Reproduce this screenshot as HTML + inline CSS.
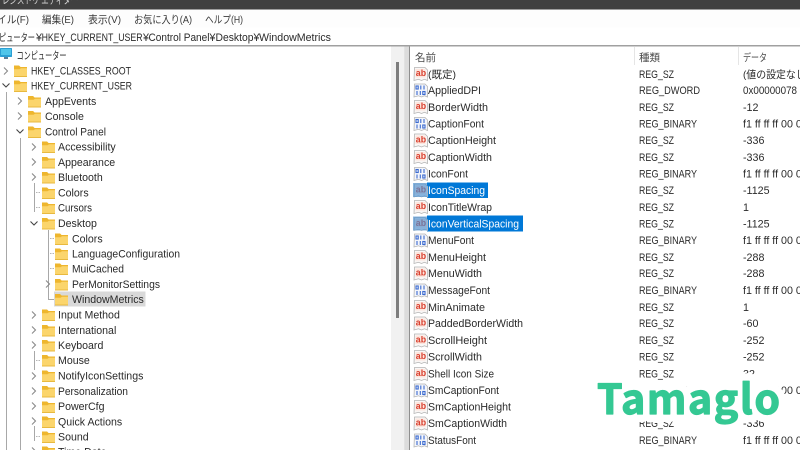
<!DOCTYPE html>
<html><head><meta charset="utf-8"><style>
html,body{margin:0;padding:0;background:#fff;width:800px;height:450px;overflow:hidden}
svg{display:block}
text{font-family:"Liberation Sans","Noto Sans CJK JP",sans-serif;font-size:10.700px;fill:#2a2a2a}
.t text{font-size:10.600px}
.j{font-size:10.500px}
.line{stroke:#a8a8a8;stroke-width:1;fill:none}
.stub{stroke:#b5b5b5;stroke-width:1;fill:none;stroke-dasharray:1.500 1}
.chev{stroke:#8a8a8a;stroke-width:1.100;fill:none}
.chevd{stroke:#444;stroke-width:1.100;fill:none}
</style></head><body>
<svg width="800" height="450" viewBox="0 0 800 450" xmlns="http://www.w3.org/2000/svg">
<defs>
<g id="f"><path d="M0 1.500h5l1.500 1.500h6.500v9.500h-13z" fill="#fbd56c"/><path d="M0 1.500h5l1.500 1.500h6.500v1.300h-6l-1.500 1h-5.500z" fill="#eeb62e"/><rect x="0" y="12" width="13" height="1" fill="#e8b93f"/></g>
<g id="a"><path d="M.5 .5h10.500l2.500 2.500v10.500l-3-1.200-3 1.200-3-1.200-4.500 1.200z" fill="#f9f7f6" stroke="#b4b4b4" stroke-width=".8"/><rect x="1.500" y="2" width="10" height="8.500" fill="#fde6de"/><text x="1.800" y="9.200" style="font-size:8.800px;font-weight:bold;fill:#d8402f">ab</text></g>
<g id="b"><path d="M.5 .5h10.500l2.500 2.500v10.500l-3-1.200-3 1.200-3-1.200-4.500 1.200z" fill="#f4f6fb" stroke="#b4b4b4" stroke-width=".8"/><g fill="none" stroke="#3a6ad0" stroke-width="1.100"><rect x="2" y="2.500" width="2.200" height="3"/><path d="M6.800 2v4M10 2v4"/><path d="M3 7.500v4M6.300 7.500v4"/><rect x="8.800" y="8" width="2.200" height="3"/></g></g>
<path id="cr" d="M-2 -3.500 L1.500 0 L-2 3.500" class="chev"/>
<path id="cd" d="M-3.500 -1.500 L0 2 L3.500 -1.500" class="chevd"/>
</defs>

<!-- title bar -->
<rect width="800" height="9.500" fill="#404040"/>
<text x="2" y="3.500" style="font-size:10.500px;fill:#d6d6d6" textLength="76" lengthAdjust="spacingAndGlyphs">レジストリ エディター</text>

<!-- menu -->
<rect y="9.500" width="800" height="18" fill="#fdfdfd"/>
<g style="fill:#3a3a3a">
<text x="-3" y="23" class="j" textLength="32" lengthAdjust="spacingAndGlyphs" style="fill:#3a3a3a">イル(F)</text>
<text x="42" y="23" class="j" textLength="32" lengthAdjust="spacingAndGlyphs" style="fill:#3a3a3a">編集(E)</text>
<text x="88" y="23" class="j" textLength="33" lengthAdjust="spacingAndGlyphs" style="fill:#3a3a3a">表示(V)</text>
<text x="134" y="23" class="j" textLength="58" lengthAdjust="spacingAndGlyphs" style="fill:#3a3a3a">お気に入り(A)</text>
<text x="205" y="23" class="j" textLength="38" lengthAdjust="spacingAndGlyphs" style="fill:#3a3a3a">ヘルプ(H)</text>
</g>

<!-- address -->
<rect y="27.500" width="800" height="17" fill="#fff"/>
<text x="-1" y="41" class="j" textLength="36" lengthAdjust="spacingAndGlyphs">ピューター</text>
<text x="36" y="41">¥</text>
<text x="41.600" y="41" textLength="101" lengthAdjust="spacingAndGlyphs">HKEY_CURRENT_USER</text>
<text x="143" y="41">¥</text>
<text x="148.500" y="41" textLength="61" lengthAdjust="spacingAndGlyphs">Control Panel</text>
<text x="209.500" y="41">¥</text>
<text x="215.500" y="41" textLength="38" lengthAdjust="spacingAndGlyphs">Desktop</text>
<text x="253.500" y="41">¥</text>
<text x="259" y="41" textLength="72" lengthAdjust="spacingAndGlyphs">WindowMetrics</text>
<rect y="45" width="800" height="1.500" fill="#a0a0a0"/>

<!-- scrollbar / splitter -->
<rect x="391" y="46.500" width="13" height="404" fill="#f1f1f1"/>
<rect x="396" y="62" width="3" height="256" fill="#7d7d7d"/>
<rect x="404" y="46.500" width="1" height="404" fill="#e2e2e2"/>
<rect x="405" y="46.500" width="4" height="404" fill="#dcdcdc"/>
<rect x="409" y="46.500" width="1" height="404" fill="#8f8f8f"/>

<!-- tree lines -->
<path class="line" d="M6.500 92V450M20.500 138V450M34.500 183V212M48.500 230V300M34.500 351V370M34.500 426V441M48.500 299.500H54"/>
<path class="stub" d="M36 192.500H41M36 207.500H41M50 238.500H54M50 253.500H54M50 268.500H54M36 360.500H41M36 436.500H41"/>

<!-- tree -->
<rect x="54" y="291.500" width="91.500" height="15" fill="#d9d9d9"/>
<g>
<rect x="0" y="48" width="12" height="9" rx=".6" fill="#2b9fd4"/><rect x="1" y="49" width="10" height="6" fill="#4fc5ea"/><rect x="4" y="57" width="4" height="2" fill="#5a7d98"/>
</g>
<text x="16.500" y="59" class="j" textLength="50" lengthAdjust="spacingAndGlyphs">コンピューター</text>

<g class="t">
<use href="#cr" x="6" y="71"/><use href="#f" x="14" y="64"/><text x="31" y="74.500" textLength="100" lengthAdjust="spacingAndGlyphs">HKEY_CLASSES_ROOT</text>
<use href="#cd" x="6" y="85"/><use href="#f" x="14" y="79"/><text x="31" y="89.500" textLength="101" lengthAdjust="spacingAndGlyphs">HKEY_CURRENT_USER</text>
<use href="#cr" x="20" y="101"/><use href="#f" x="28" y="94.500"/><text x="45" y="105">AppEvents</text>
<use href="#cr" x="20" y="116"/><use href="#f" x="28" y="109.500"/><text x="45" y="120">Console</text>
<use href="#cd" x="20" y="131"/><use href="#f" x="28" y="125"/><text x="45" y="135.500" textLength="61" lengthAdjust="spacingAndGlyphs">Control Panel</text>
<use href="#cr" x="34" y="147"/><use href="#f" x="42" y="140"/><text x="58" y="150.500">Accessibility</text>
<use href="#cr" x="34" y="162"/><use href="#f" x="42" y="155.500"/><text x="58" y="166">Appearance</text>
<use href="#cr" x="34" y="177"/><use href="#f" x="42" y="170.500"/><text x="58" y="181">Bluetooth</text>
<use href="#f" x="42" y="186"/><text x="58" y="196.500">Colors</text>
<use href="#f" x="42" y="201"/><text x="58" y="211.500" textLength="34" lengthAdjust="spacingAndGlyphs">Cursors</text>
<use href="#cd" x="34" y="223"/><use href="#f" x="42" y="216.500"/><text x="58" y="227">Desktop</text>
<use href="#f" x="55" y="232"/><text x="72" y="242.500">Colors</text>
<use href="#f" x="55" y="247"/><text x="72" y="257.500" textLength="108" lengthAdjust="spacingAndGlyphs">LanguageConfiguration</text>
<use href="#f" x="55" y="262"/><text x="72" y="272.500" textLength="52" lengthAdjust="spacingAndGlyphs">MuiCached</text>
<use href="#cr" x="48" y="284"/><use href="#f" x="55" y="277.500"/><text x="72" y="288" textLength="88" lengthAdjust="spacingAndGlyphs">PerMonitorSettings</text>
<use href="#f" x="55" y="292.500"/><text x="72" y="303">WindowMetrics</text>
<use href="#cr" x="34" y="315"/><use href="#f" x="42" y="308"/><text x="58" y="318.500">Input Method</text>
<use href="#cr" x="34" y="330"/><use href="#f" x="42" y="323.500"/><text x="58" y="334">International</text>
<use href="#cr" x="34" y="345"/><use href="#f" x="42" y="338.500"/><text x="58" y="349">Keyboard</text>
<use href="#f" x="42" y="353.500"/><text x="58" y="364">Mouse</text>
<use href="#cr" x="34" y="376"/><use href="#f" x="42" y="369"/><text x="58" y="379.500">NotifyIconSettings</text>
<use href="#cr" x="34" y="391"/><use href="#f" x="42" y="384.500"/><text x="58" y="395" textLength="70" lengthAdjust="spacingAndGlyphs">Personalization</text>
<use href="#cr" x="34" y="406"/><use href="#f" x="42" y="400"/><text x="58" y="410">PowerCfg</text>
<use href="#cr" x="34" y="421"/><use href="#f" x="42" y="415"/><text x="58" y="425.500">Quick Actions</text>
<use href="#f" x="42" y="430"/><text x="58" y="440.500">Sound</text>
<use href="#cr" x="34" y="451"/><use href="#f" x="42" y="445"/><text x="58" y="455.500">Time Date</text>
</g>

<!-- list header -->
<text x="415" y="61" class="j" style="fill:#4a4a4a">名前</text>
<text x="639" y="61" class="j" style="fill:#4a4a4a">種類</text>
<text x="743" y="61" class="j" style="fill:#4a4a4a" textLength="24" lengthAdjust="spacingAndGlyphs">データ</text>
<rect x="634" y="47" width="1" height="18" fill="#e5e5e5"/><rect x="738" y="47" width="1" height="18" fill="#e5e5e5"/>

<!-- selections -->
<rect x="427" y="182.500" width="61" height="15.500" fill="#0078d7"/>
<rect x="427" y="215.500" width="96" height="16" fill="#0078d7"/>

<!-- list -->
<g class="r">
<use href="#a" x="414" y="67"/><text x="428" y="78" class="j">(既定)</text><text x="639" y="78" textLength="35" lengthAdjust="spacingAndGlyphs">REG_SZ</text><text x="743" y="78" class="j" textLength="66" lengthAdjust="spacingAndGlyphs">(値の設定なし)</text>
<use href="#b" x="414" y="83.500"/><text x="428" y="94" textLength="53" lengthAdjust="spacingAndGlyphs">AppliedDPI</text><text x="639" y="94" textLength="61" lengthAdjust="spacingAndGlyphs">REG_DWORD</text><text x="743" y="94" textLength="54" lengthAdjust="spacingAndGlyphs">0x00000078</text>
<use href="#a" x="414" y="100"/><text x="428" y="111" textLength="60" lengthAdjust="spacingAndGlyphs">BorderWidth</text><text x="639" y="111" textLength="35" lengthAdjust="spacingAndGlyphs">REG_SZ</text><text x="743" y="111">-12</text>
<use href="#b" x="414" y="117"/><text x="428" y="127.500" textLength="56" lengthAdjust="spacingAndGlyphs">CaptionFont</text><text x="639" y="127.500" textLength="58" lengthAdjust="spacingAndGlyphs">REG_BINARY</text><text x="743" y="127.500">f1 ff ff ff 00 00</text>
<use href="#a" x="414" y="133.500"/><text x="428" y="144" textLength="68" lengthAdjust="spacingAndGlyphs">CaptionHeight</text><text x="639" y="144" textLength="35" lengthAdjust="spacingAndGlyphs">REG_SZ</text><text x="743" y="144">-336</text>
<use href="#a" x="414" y="150"/><text x="428" y="161" textLength="64" lengthAdjust="spacingAndGlyphs">CaptionWidth</text><text x="639" y="161" textLength="35" lengthAdjust="spacingAndGlyphs">REG_SZ</text><text x="743" y="161">-336</text>
<use href="#b" x="414" y="167"/><text x="428" y="177.500" textLength="40" lengthAdjust="spacingAndGlyphs">IconFont</text><text x="639" y="177.500" textLength="58" lengthAdjust="spacingAndGlyphs">REG_BINARY</text><text x="743" y="177.500">f1 ff ff ff 00 00</text>
<use href="#a" x="414" y="183.500"/><rect x="413" y="183" width="14" height="14" fill="#4a8fd0" opacity=".65"/><text x="428" y="194" style="fill:#fff" textLength="57" lengthAdjust="spacingAndGlyphs">IconSpacing</text><text x="639" y="194" textLength="35" lengthAdjust="spacingAndGlyphs">REG_SZ</text><text x="743" y="194">-1125</text>
<use href="#a" x="414" y="200"/><text x="428" y="211" textLength="64" lengthAdjust="spacingAndGlyphs">IconTitleWrap</text><text x="639" y="211" textLength="35" lengthAdjust="spacingAndGlyphs">REG_SZ</text><text x="743" y="211">1</text>
<use href="#a" x="414" y="217"/><rect x="413" y="216.500" width="14" height="14" fill="#4a8fd0" opacity=".65"/><text x="428" y="227.500" style="fill:#fff" textLength="91" lengthAdjust="spacingAndGlyphs">IconVerticalSpacing</text><text x="639" y="227.500" textLength="35" lengthAdjust="spacingAndGlyphs">REG_SZ</text><text x="743" y="227.500">-1125</text>
<use href="#b" x="414" y="233.500"/><text x="428" y="244" textLength="46" lengthAdjust="spacingAndGlyphs">MenuFont</text><text x="639" y="244" textLength="58" lengthAdjust="spacingAndGlyphs">REG_BINARY</text><text x="743" y="244">f1 ff ff ff 00 00</text>
<use href="#a" x="414" y="250"/><text x="428" y="261" textLength="58" lengthAdjust="spacingAndGlyphs">MenuHeight</text><text x="639" y="261" textLength="35" lengthAdjust="spacingAndGlyphs">REG_SZ</text><text x="743" y="261">-288</text>
<use href="#a" x="414" y="266.500"/><text x="428" y="277" textLength="54" lengthAdjust="spacingAndGlyphs">MenuWidth</text><text x="639" y="277" textLength="35" lengthAdjust="spacingAndGlyphs">REG_SZ</text><text x="743" y="277">-288</text>
<use href="#b" x="414" y="283.500"/><text x="428" y="294" textLength="62" lengthAdjust="spacingAndGlyphs">MessageFont</text><text x="639" y="294" textLength="58" lengthAdjust="spacingAndGlyphs">REG_BINARY</text><text x="743" y="294">f1 ff ff ff 00 00</text>
<use href="#a" x="414" y="300"/><text x="428" y="311" textLength="57" lengthAdjust="spacingAndGlyphs">MinAnimate</text><text x="639" y="311" textLength="35" lengthAdjust="spacingAndGlyphs">REG_SZ</text><text x="743" y="311">1</text>
<use href="#a" x="414" y="316.500"/><text x="428" y="327" textLength="95" lengthAdjust="spacingAndGlyphs">PaddedBorderWidth</text><text x="639" y="327" textLength="35" lengthAdjust="spacingAndGlyphs">REG_SZ</text><text x="743" y="327">-60</text>
<use href="#a" x="414" y="333.500"/><text x="428" y="344" textLength="59" lengthAdjust="spacingAndGlyphs">ScrollHeight</text><text x="639" y="344" textLength="35" lengthAdjust="spacingAndGlyphs">REG_SZ</text><text x="743" y="344">-252</text>
<use href="#a" x="414" y="350"/><text x="428" y="360.500" textLength="54" lengthAdjust="spacingAndGlyphs">ScrollWidth</text><text x="639" y="360.500" textLength="35" lengthAdjust="spacingAndGlyphs">REG_SZ</text><text x="743" y="360.500">-252</text>
<use href="#a" x="414" y="367"/><text x="428" y="377.500" textLength="66" lengthAdjust="spacingAndGlyphs">Shell Icon Size</text><text x="639" y="377.500" textLength="35" lengthAdjust="spacingAndGlyphs">REG_SZ</text><text x="743" y="377.500">32</text>
<use href="#b" x="414" y="383.500"/><text x="428" y="394" textLength="71" lengthAdjust="spacingAndGlyphs">SmCaptionFont</text><text x="639" y="394" textLength="58" lengthAdjust="spacingAndGlyphs">REG_BINARY</text><text x="743" y="394">f1 ff ff ff 00 00</text>
<use href="#a" x="414" y="400"/><text x="428" y="410.500" textLength="83" lengthAdjust="spacingAndGlyphs">SmCaptionHeight</text><text x="639" y="410.500" textLength="35" lengthAdjust="spacingAndGlyphs">REG_SZ</text><text x="743" y="410.500">-336</text>
<use href="#a" x="414" y="416.500"/><text x="428" y="427" textLength="79" lengthAdjust="spacingAndGlyphs">SmCaptionWidth</text><text x="639" y="427" textLength="35" lengthAdjust="spacingAndGlyphs">REG_SZ</text><text x="743" y="427">-336</text>
<use href="#b" x="414" y="433.500"/><text x="428" y="444" textLength="48" lengthAdjust="spacingAndGlyphs">StatusFont</text><text x="639" y="444" textLength="58" lengthAdjust="spacingAndGlyphs">REG_BINARY</text><text x="743" y="444">f1 ff ff ff 00 00</text>
</g>

<!-- watermark -->
<text x="597" y="414" textLength="183" style="font-family:'Noto Sans CJK JP','Liberation Sans',sans-serif;font-size:41px;font-weight:700;fill:#34c893;stroke:#fff;stroke-width:16px;stroke-linejoin:round;paint-order:stroke fill">Tamaglo</text>
<text x="597" y="414" textLength="183" style="font-family:'Noto Sans CJK JP','Liberation Sans',sans-serif;font-size:41px;font-weight:700;fill:#34c893;stroke:#34c893;stroke-width:1.200px;stroke-linejoin:round">Tamaglo</text>
</svg>
</body></html>
